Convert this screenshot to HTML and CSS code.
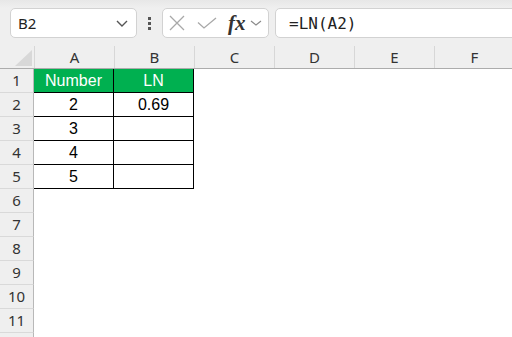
FILE: index.html
```html
<!DOCTYPE html>
<html lang="en">
<head>
  <meta charset="UTF-8" />
  <title>LN</title>
  <link rel="stylesheet" href="styles.css">
</head>
<body>

  <div class="toolbar">
    <div class="namebox">
      <span>B2</span>
      <svg width="12" height="7" viewBox="0 0 12 7"><path d="M1 1 L6 6 L11 1" fill="none" stroke="#555" stroke-width="1.4"/></svg>
    </div>
    <div class="more">
      <span class="dot"></span>
      <span class="dot"></span>
      <span class="dot"></span>
    </div>
    <div class="fbuttons">
      <svg width="16" height="16" viewBox="0 0 16 16"><path d="M1 1 L15 15 M15 1 L1 15" stroke="#a8a8a8" stroke-width="1.3"/></svg>
      <svg width="20" height="12" viewBox="0 0 20 12"><path d="M1 5.5 L7 11 L19 1" fill="none" stroke="#a8a8a8" stroke-width="1.3"/></svg>
      <span class="fx">fx</span>
      <svg width="12" height="6" viewBox="0 0 12 6"><path d="M1 1 L6 5 L11 1" fill="none" stroke="#8a8a8a" stroke-width="1.2"/></svg>
    </div>
    <div class="formula">=LN(A2)</div>
  </div>

  <div class="sheet">
    <div class="colheads">
      <div class="corner"><span class="tri"></span></div>
      <div class="ch">A</div>
      <div class="ch">B</div>
      <div class="ch">C</div>
      <div class="ch">D</div>
      <div class="ch">E</div>
      <div class="ch">F</div>
    </div>

    <div class="row">
      <div class="rh">1</div>
      <div class="cell head">Number</div>
      <div class="cell head">LN</div>
    </div>
    <div class="row">
      <div class="rh">2</div>
      <div class="cell boxed">2</div>
      <div class="cell boxed">0.69</div>
    </div>
    <div class="row">
      <div class="rh">3</div>
      <div class="cell boxed">3</div>
      <div class="cell boxed"></div>
    </div>
    <div class="row">
      <div class="rh">4</div>
      <div class="cell boxed">4</div>
      <div class="cell boxed"></div>
    </div>
    <div class="row">
      <div class="rh">5</div>
      <div class="cell boxed">5</div>
      <div class="cell boxed"></div>
    </div>
    <div class="row"><div class="rh">6</div></div>
    <div class="row"><div class="rh">7</div></div>
    <div class="row"><div class="rh">8</div></div>
    <div class="row"><div class="rh">9</div></div>
    <div class="row"><div class="rh">10</div></div>
    <div class="row"><div class="rh">11</div></div>
    <div class="row"><div class="rh"></div></div>
  </div>

</body>
</html>
```

FILE: styles.css
```css
body {
  margin: 0;
  width: 512px;
  height: 337px;
  overflow: hidden;
  background: white;
  font-family: "Noto Sans", sans-serif;
}

.toolbar {
  height: 46px;
  box-sizing: border-box;
  padding: 8px 0 0 10px;
  display: flex;
  align-items: flex-start;
  background: linear-gradient(#e7e7e7 0, #efefef 8px, #efefef 100%);
}

.namebox, .fbuttons, .formula {
  height: 30px;
  box-sizing: border-box;
  background: white;
  border: 1px solid #d2d2d2;
  border-radius: 5px;
  display: flex;
  align-items: center;
}

.namebox {
  width: 127px;
  padding: 0 8px 0 7px;
  justify-content: space-between;
  font-size: 15px;
  color: #222;
}

.more {
  width: 25px;
  height: 30px;
  display: flex;
  flex-direction: column;
  align-items: center;
  justify-content: center;
  gap: 2px;
}

.dot {
  width: 3px;
  height: 3px;
  background: #555;
}

.fbuttons {
  width: 107px;
  padding-left: 6px;
  gap: 0;
}

.fbuttons svg:nth-child(1) { margin-right: 12px; }
.fbuttons svg:nth-child(2) { margin-right: 11px; }

.fx {
  font-family: "Liberation Serif", serif;
  font-style: italic;
  font-weight: bold;
  font-size: 21px;
  color: #333;
  margin-right: 4px;
  line-height: 1;
}

.formula {
  flex: 1;
  margin-left: 6px;
  margin-right: -10px;
  padding-left: 13px;
  font-family: "DejaVu Sans Mono", monospace;
  font-size: 16px;
  color: #222;
}

.sheet {
  background: white;
}

.colheads {
  display: flex;
  height: 23px;
  box-sizing: border-box;
  background: #efefef;
  border-bottom: 1px solid #acacac;
}

.corner {
  width: 34px;
  flex-shrink: 0;
  box-sizing: border-box;
  display: flex;
  justify-content: flex-end;
  align-items: flex-end;
  padding: 0 2px 2px 0;
}

.tri {
  width: 0;
  height: 0;
  border-left: 17px solid transparent;
  border-bottom: 16px solid #d8d8d8;
}

.ch {
  width: 80px;
  flex-shrink: 0;
  box-sizing: border-box;
  border-left: 1px solid #d7d7d7;
  text-align: center;
  font-size: 15px;
  line-height: 22px;
  color: #333;
}

.row {
  display: flex;
  height: 24px;
}

.rh {
  width: 34px;
  flex-shrink: 0;
  box-sizing: border-box;
  background: #efefef;
  border-right: 1px solid #b8b8b8;
  border-bottom: 1px solid #d9d9d9;
  text-align: center;
  font-size: 15px;
  line-height: 23px;
  color: #333;
}

.cell {
  width: 80px;
  flex-shrink: 0;
  box-sizing: border-box;
  border-right: 1px solid black;
  border-bottom: 1px solid black;
  text-align: center;
  font-family: "Liberation Sans", Arial, sans-serif;
  font-size: 16px;
  line-height: 23px;
  color: black;
}

.head {
  background: #00b050;
  color: white;
}
```
